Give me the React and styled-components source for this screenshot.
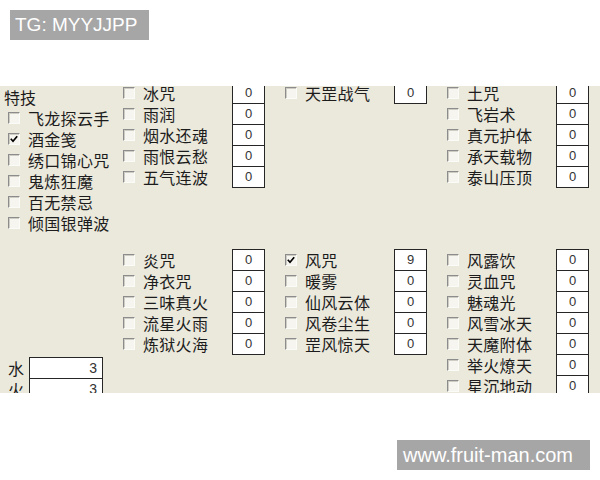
import styled, { createGlobalStyle } from "styled-components";

const GlobalStyle = createGlobalStyle`
  html, body {
    margin: 0;
    padding: 0;
    background: #ffffff;
  }
`;

const upperColumns = [
  [
    { label: "冰咒", value: 0 },
    { label: "雨润", value: 0 },
    { label: "烟水还魂", value: 0 },
    { label: "雨恨云愁", value: 0 },
    { label: "五气连波", value: 0 },
  ],
  [{ label: "天罡战气", value: 0 }],
  [
    { label: "土咒", value: 0 },
    { label: "飞岩术", value: 0 },
    { label: "真元护体", value: 0 },
    { label: "承天载物", value: 0 },
    { label: "泰山压顶", value: 0 },
  ],
];

const lowerColumns = [
  [
    { label: "炎咒", value: 0 },
    { label: "净衣咒", value: 0 },
    { label: "三味真火", value: 0 },
    { label: "流星火雨", value: 0 },
    { label: "炼狱火海", value: 0 },
  ],
  [
    { label: "风咒", value: 9, checked: true },
    { label: "暖雾", value: 0 },
    { label: "仙风云体", value: 0 },
    { label: "风卷尘生", value: 0 },
    { label: "罡风惊天", value: 0 },
  ],
  [
    { label: "风露饮", value: 0 },
    { label: "灵血咒", value: 0 },
    { label: "魅魂光", value: 0 },
    { label: "风雪冰天", value: 0 },
    { label: "天魔附体", value: 0 },
    { label: "举火燎天", value: 0 },
    { label: "星沉地动", value: 0 },
  ],
];

const specials = [
  { label: "飞龙探云手" },
  { label: "酒金笺", checked: true },
  { label: "绣口锦心咒" },
  { label: "鬼炼狂魔" },
  { label: "百无禁忌" },
  { label: "倾国银弹波" },
];

const stats = [
  { label: "水", value: 3 },
  { label: "火", value: 3 },
];

function CheckBox({ checked }) {
  return (
    <Check>
      {checked && (
        <svg width="8" height="8" viewBox="0 0 8 8">
          <polyline points="0.8,3.8 3,6.2 7.2,1.2" fill="none" stroke="#000" strokeWidth="1.7" />
        </svg>
      )}
    </Check>
  );
}

function SkillColumn({ items }) {
  return (
    <Column>
      {items.map((item) => (
        <SkillRow key={item.label}>
          <CheckBox checked={item.checked} />
          <Label>{item.label}</Label>
          <ValueBox>{item.value}</ValueBox>
        </SkillRow>
      ))}
    </Column>
  );
}

export default function App() {
  return (
    <>
      <GlobalStyle />
      <Page>
        <Header>
          <Tag>TG: MYYJJPP</Tag>
        </Header>

        <Panel>
          <PanelGrid>
            {/* 特技 */}
            <SpecialColumn>
              <Heading>特技</Heading>
              {specials.map((item) => (
                <SpecialRow key={item.label}>
                  <CheckBox checked={item.checked} />
                  <Label>{item.label}</Label>
                </SpecialRow>
              ))}
            </SpecialColumn>
            {upperColumns.map((items, i) => (
              <SkillColumn key={`u${i}`} items={items} />
            ))}

            {/* 属性 */}
            <StatColumn>
              {stats.map((s) => (
                <StatRow key={s.label}>
                  <StatLabel>{s.label}</StatLabel>
                  <StatBox>{s.value}</StatBox>
                </StatRow>
              ))}
            </StatColumn>
            {lowerColumns.map((items, i) => (
              <SkillColumn key={`l${i}`} items={items} />
            ))}
          </PanelGrid>
        </Panel>

        <Footer>
          <Watermark>www.fruit-man.com</Watermark>
        </Footer>
      </Page>
    </>
  );
}

const Page = styled.div`
  width: 600px;
  height: 480px;
  display: flex;
  flex-direction: column;
  background: #ffffff;
  overflow: hidden;
`;

const Header = styled.div`
  height: 86px;
  padding: 10px;
  box-sizing: border-box;
  flex-shrink: 0;
`;

const Tag = styled.div`
  width: 139px;
  height: 30px;
  box-sizing: border-box;
  padding-left: 5px;
  background: #a6a6a6;
  color: #ffffff;
  font-family: "Liberation Sans", Arial, sans-serif;
  font-size: 19px;
  line-height: 30px;
  white-space: nowrap;
`;

const Panel = styled.div`
  height: 307px;
  flex-shrink: 0;
  background: #ebe9dc;
  overflow: hidden;
`;

const PanelGrid = styled.div`
  margin-top: -4px;
  display: grid;
  grid-template-columns: 123px 162px 162px 1fr;
  grid-template-rows: 151px auto;
  row-gap: 16px;
  align-items: start;
  font-family: "Noto Sans CJK SC", "Noto Sans", sans-serif;
  color: #1c1c1c;
`;

const Column = styled.div`
  display: flex;
  flex-direction: column;
`;

const SpecialColumn = styled(Column)`
  margin-top: 4px;
  padding-left: 8px;
`;

const Heading = styled.div`
  height: 21px;
  margin-left: -4px;
  display: flex;
  align-items: center;
  font-size: 16px;
  line-height: 16px;
`;

const SkillRow = styled.div`
  display: grid;
  grid-template-columns: 20px 89px 33px;
  align-items: center;
  height: 21px;
`;

const SpecialRow = styled.div`
  display: grid;
  grid-template-columns: 20px auto;
  align-items: center;
  height: 21px;
`;

const Check = styled.span`
  width: 12px;
  height: 12px;
  box-sizing: border-box;
  display: flex;
  align-items: center;
  justify-content: center;
  background: #f6f5ef;
  border-top: 1px solid #8c8c8c;
  border-left: 1px solid #8c8c8c;
  border-right: 1px solid #fbfbf7;
  border-bottom: 1px solid #fbfbf7;
  box-shadow: inset 1px 1px 0 #cfcdc3;
`;

const Label = styled.span`
  font-size: 16px;
  line-height: 16px;
  letter-spacing: 0.3px;
  white-space: nowrap;
`;

const ValueBox = styled.div`
  align-self: start;
  width: 33px;
  height: 22px;
  box-sizing: border-box;
  border: 1px solid #262626;
  background: #ffffff;
  color: #333333;
  font-family: "Liberation Sans", Arial, sans-serif;
  font-size: 13px;
  line-height: 20px;
  text-align: center;
`;

const StatColumn = styled(Column)`
  margin-top: 108px;
  padding-left: 8px;
`;

const StatRow = styled.div`
  display: grid;
  grid-template-columns: 21px 74px;
  align-items: center;
  height: 21px;
`;

const StatLabel = styled.span`
  font-size: 16px;
  line-height: 16px;
`;

const StatBox = styled.div`
  align-self: start;
  height: 22px;
  box-sizing: border-box;
  border: 1px solid #262626;
  background: #ffffff;
  color: #333333;
  padding-right: 5px;
  font-family: "Liberation Sans", Arial, sans-serif;
  font-size: 14px;
  line-height: 20px;
  text-align: right;
`;

const Footer = styled.div`
  flex: 1;
  display: flex;
  justify-content: flex-end;
  align-items: flex-end;
  padding: 10px;
`;

const Watermark = styled.div`
  width: 193px;
  height: 30px;
  box-sizing: border-box;
  padding-left: 6px;
  background: #a6a6a6;
  color: #ffffff;
  font-family: "Liberation Sans", Arial, sans-serif;
  font-size: 20px;
  line-height: 30px;
  white-space: nowrap;
`;
